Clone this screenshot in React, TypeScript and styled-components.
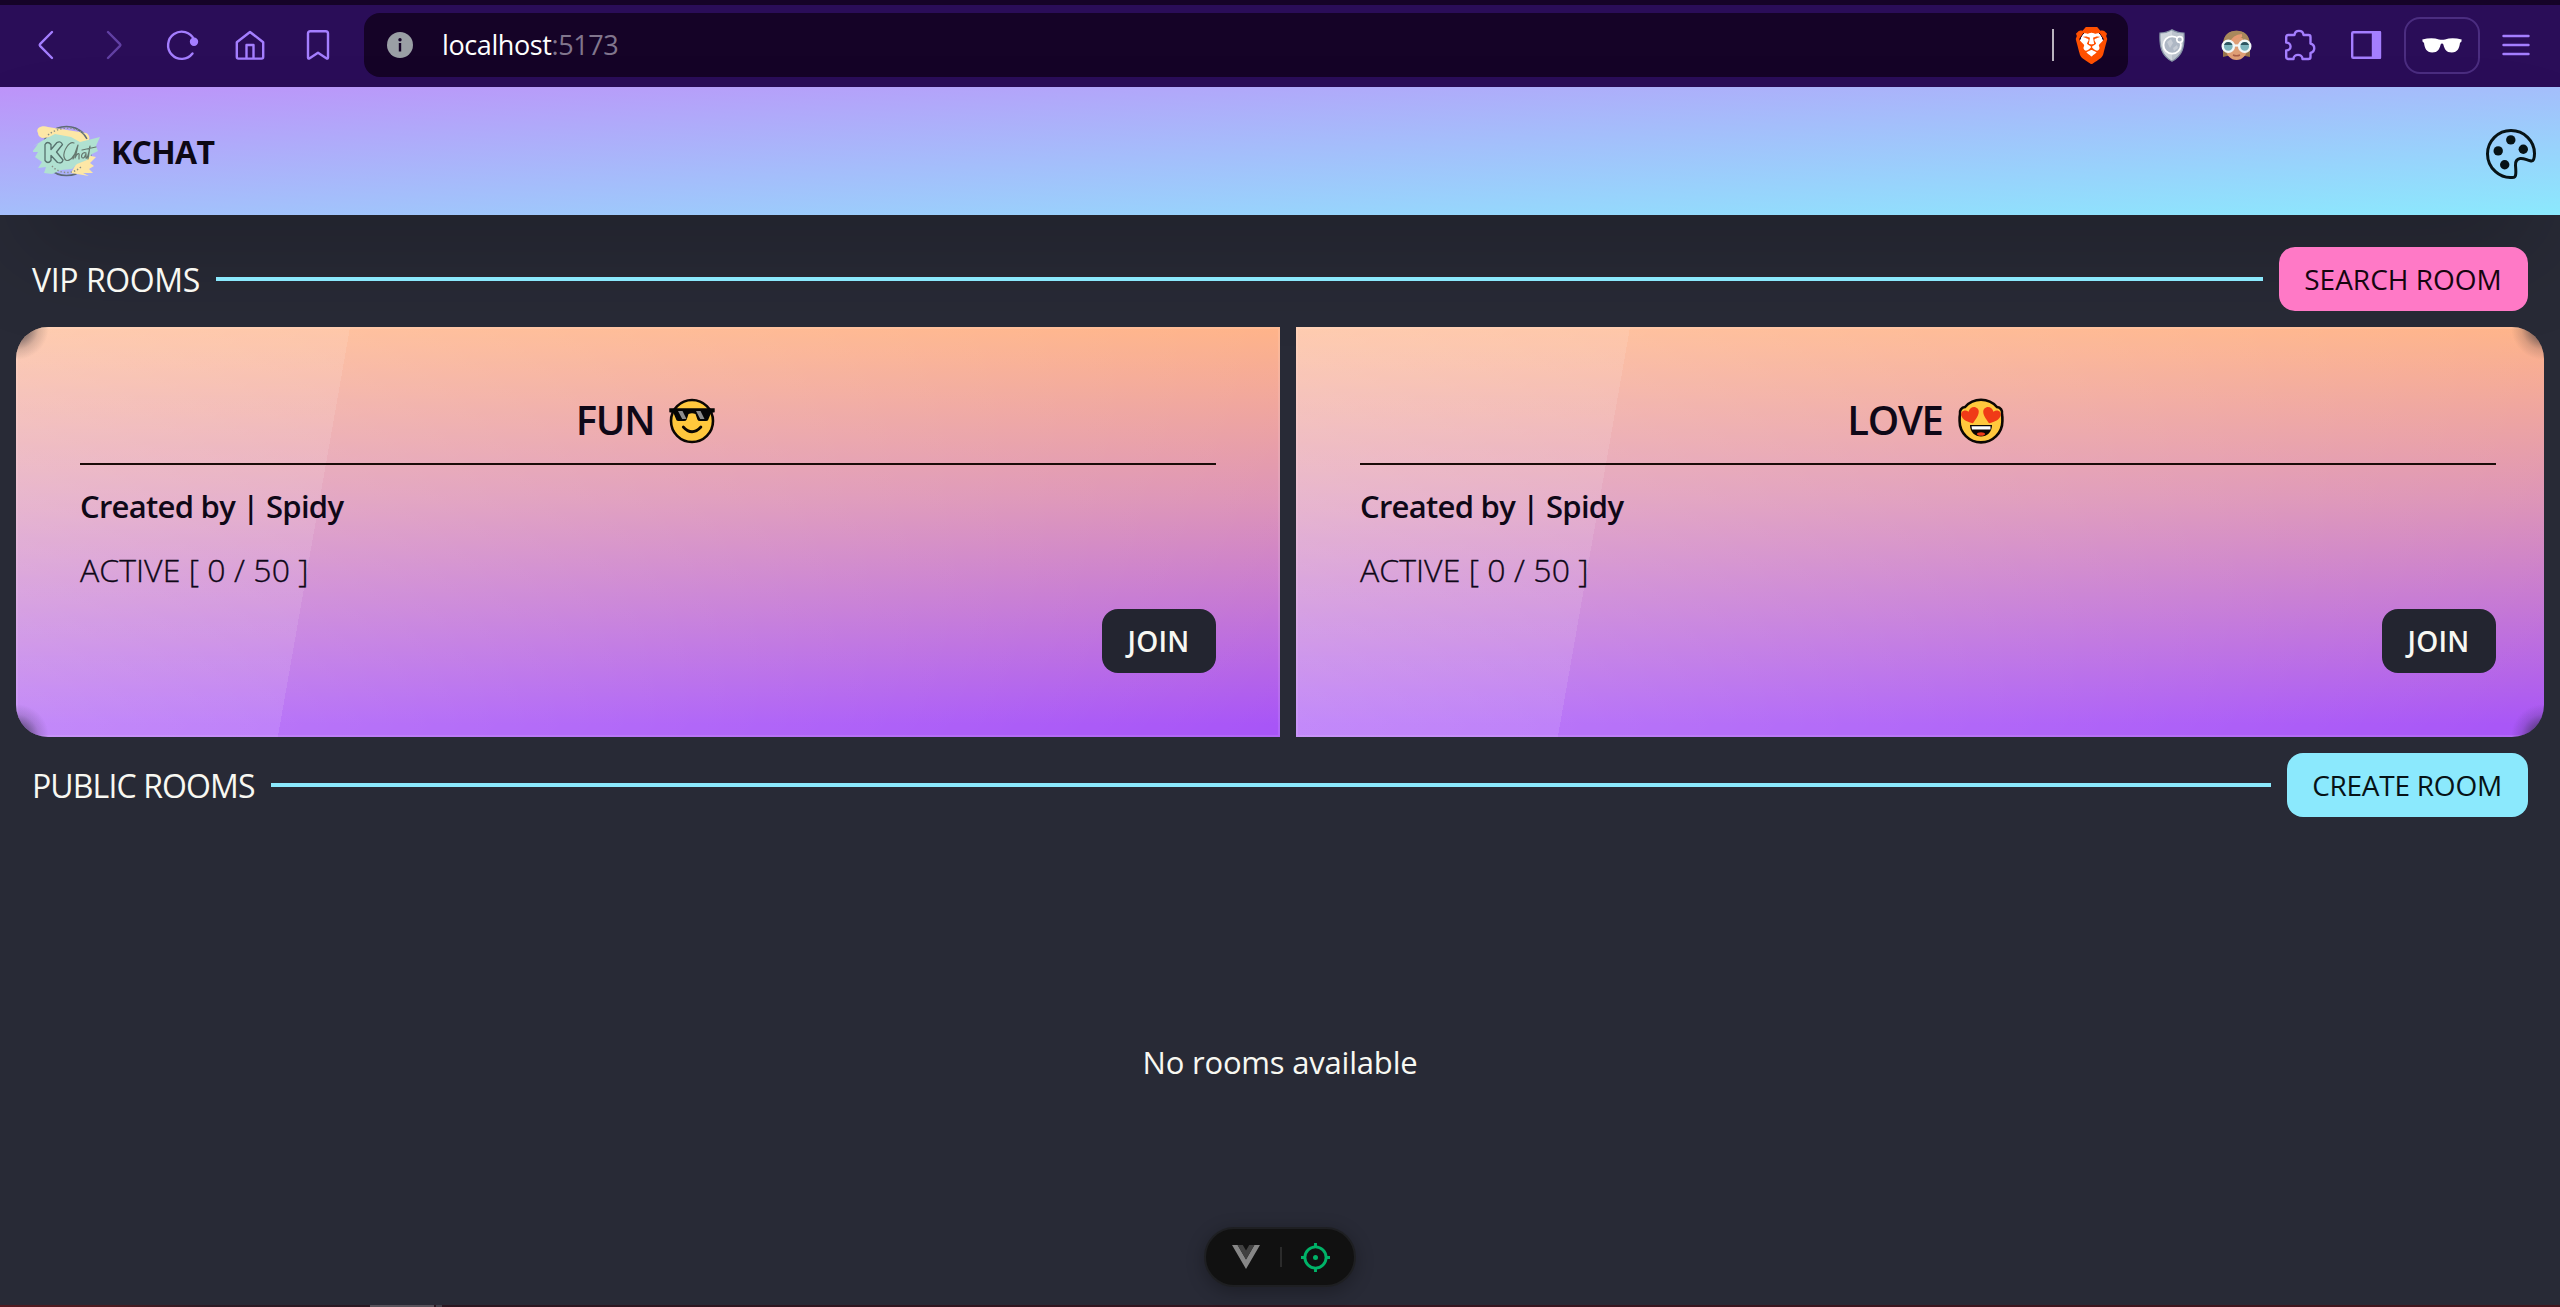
import React from "react";
import styled, { createGlobalStyle, css } from "styled-components";
import { SiBrave } from "react-icons/si";

const GlobalStyle = createGlobalStyle`
  *, *::before, *::after { box-sizing: border-box; }
  html, body { margin: 0; padding: 0; background: #282a36; }
  body {
    font-family: "Open Sans", "Noto Sans", sans-serif;
    color: #f8f8f2;
    overflow: hidden;
  }
`;

/* ---------- window ---------- */

const Window = styled.div`
  display: flex;
  flex-direction: column;
  width: 100%;
  height: 1307px;
  background: #282a36;
`;

/* ---------- browser toolbar ---------- */

const BrowserBar = styled.div`
  display: flex;
  align-items: center;
  flex: none;
  height: 87px;
  padding: 0 8px 2px 12px;
  border-top: 5px solid #150327;
  background: #2a0d58;
  color: #a47eff;
`;

const BarSlot = styled.div<{ $width?: number; $dim?: boolean }>`
  display: flex;
  align-items: center;
  justify-content: center;
  flex: none;
  width: ${(p) => p.$width ?? 68}px;
  height: 64px;
  opacity: ${(p) => (p.$dim ? 0.45 : 1)};
`;

const BarIcon = styled.svg`
  display: block;
  overflow: visible;
  fill: none;
  stroke: currentColor;
  stroke-width: 2.4;
  stroke-linecap: round;
  stroke-linejoin: round;
`;

const AddressBar = styled.div`
  display: flex;
  align-items: center;
  flex: 1;
  height: 64px;
  margin: 0 12px;
  padding: 0 21px 0 23px;
  border-radius: 16px;
  background: #150327;
`;

const Url = styled.div`
  flex: 1;
  margin-left: 29px;
  color: #ffffff;
  font-size: 27px;
  line-height: 40px;
  letter-spacing: -0.4px;
`;

const Port = styled.span`
  color: #81768d;
`;

const AddressDivider = styled.div`
  width: 2px;
  height: 32px;
  margin-right: 22px;
  background: #b9b3be;
`;

const BraveBadge = styled.div`
  display: flex;
  align-items: center;
  justify-content: center;
  width: 31px;
  height: 37px;
  color: #ff5000;
  background: radial-gradient(ellipse 12px 14px at 50% 46%, #fff 95%, transparent 100%);
`;

const BraveLion = styled(SiBrave)`
  flex: none;
  width: 37px;
  height: 37px;
`;

const ProfileButton = styled.div`
  display: flex;
  align-items: center;
  justify-content: center;
  flex: none;
  width: 76px;
  height: 57px;
  margin-left: 4px;
  border: 2px solid #4b2d80;
  border-radius: 16px;
`;

/* ---------- site header ---------- */

const SiteHeader = styled.header`
  display: flex;
  align-items: center;
  justify-content: space-between;
  flex: none;
  height: 128px;
  padding: 0 24px 0 33px;
  background: linear-gradient(to bottom right, #bd93f9, #8be9fd);
  box-shadow: 0 50px 100px -24px rgba(0, 0, 0, 0.25);
`;

const Brand = styled.div`
  display: flex;
  align-items: center;
  gap: 10px;
`;

const BrandName = styled.h1`
  margin: 0;
  padding-top: 2px;
  color: #0d0814;
  font-size: 32px;
  font-weight: 700;
  line-height: 48px;
  letter-spacing: -0.7px;
`;

/* ---------- sections ---------- */

const Page = styled.main`
  position: relative;
  display: flex;
  flex-direction: column;
  flex: 1;
  padding-top: 32px;
`;

const SectionBar = styled.div`
  display: flex;
  align-items: center;
  gap: 16px;
  flex: none;
  height: 64px;
  padding: 0 32px;
`;

const SectionTitle = styled.h2<{ $width: number; $spacing: number }>`
  flex: none;
  width: ${(p) => p.$width}px;
  margin: 0;
  padding-top: 2px;
  font-size: 32px;
  font-weight: 400;
  line-height: 48px;
  white-space: nowrap;
  letter-spacing: ${(p) => p.$spacing}px;
`;

const Rule = styled.div`
  flex: 1;
  height: 4px;
  background: #8be9fd;
`;

const tones = {
  pink: css`background: #ff79c6; color: #16050f;`,
  cyan: css`background: #8be9fd; color: #071316;`,
  dark: css`background: #232530; color: #f8f8f2; font-weight: 600;`,
};

const Button = styled.button<{ $tone: keyof typeof tones; $width: number; $spacing?: number }>`
  flex: none;
  width: ${(p) => p.$width}px;
  height: 64px;
  padding: 0 1px 0 0;
  border: 0;
  border-radius: 16px;
  font-family: inherit;
  font-size: 28px;
  font-weight: 400;
  line-height: 64px;
  text-align: center;
  white-space: nowrap;
  letter-spacing: ${(p) => p.$spacing ?? 0}px;
  ${(p) => tones[p.$tone]}
`;

/* ---------- rooms carousel ---------- */

const cornerShade = (at: string) =>
  `radial-gradient(circle at ${at}, rgba(40,42,54,.7) 8px, rgba(40,42,54,.48) 14px, rgba(40,42,54,.16) 23px, transparent 33px)`;

const Carousel = styled.div`
  position: relative;
  display: flex;
  gap: 16px;
  flex: none;
  height: 410px;
  margin: 16px;
  border-radius: 32px;
  overflow: hidden;

  &::after {
    content: "";
    position: absolute;
    inset: 0;
    pointer-events: none;
    background: ${cornerShade("0 0")}, ${cornerShade("100% 0")},
      ${cornerShade("0 100%")}, ${cornerShade("100% 100%")};
  }
`;

const RoomCard = styled.article`
  display: flex;
  flex-direction: column;
  flex: none;
  width: 1264px;
  padding: 64px;
  color: #0f0817;
  background:
    linear-gradient(135deg, rgba(255, 255, 255, 0.3) 0%, transparent 100%),
    linear-gradient(100deg, rgba(255, 255, 255, 0.1) 25%, transparent 25%),
    linear-gradient(to bottom, #ffae80, #dc90b4 42%, #a855f7 97%);
  box-shadow: inset 0 0 0 2px rgba(255, 255, 255, 0.1);
`;

const RoomTitle = styled.h3`
  display: flex;
  align-items: flex-start;
  justify-content: center;
  gap: 15px;
  height: 74px;
  margin: 0 0 17px;
  padding-right: 5px;
  border-bottom: 2px solid #1a0b08;
  font-size: 40px;
  font-weight: 600;
  line-height: 58px;
  letter-spacing: -1.3px;

  svg { margin-top: 7px; }
`;

const Creator = styled.p`
  margin: 0 0 16px;
  font-size: 31px;
  font-weight: 600;
  line-height: 48px;
  letter-spacing: -0.72px;
`;

const Active = styled.p`
  margin: 0 0 15px;
  font-size: 32px;
  font-weight: 300;
  line-height: 48px;
  letter-spacing: 0.05px;
  -webkit-text-stroke: 0.35px currentColor;
`;

const Actions = styled.div`
  display: flex;
  justify-content: flex-end;
`;

const Empty = styled.div`
  display: flex;
  align-items: center;
  justify-content: center;
  flex: 1;
  padding-top: 2px;
  font-size: 31px;
  letter-spacing: -0.2px;
`;

/* ---------- overlays ---------- */

const DevTools = styled.div`
  position: absolute;
  left: 50%;
  top: 1227px;
  transform: translateX(-50%);
  display: flex;
  align-items: center;
  justify-content: space-between;
  width: 152px;
  height: 60px;
  padding: 0 24px 0 26px;
  border: 2px solid #1e1f22;
  border-radius: 30px;
  background: #111111;
  box-shadow: 0 4px 18px rgba(0, 0, 0, 0.3);
`;

const DevDivider = styled.div`
  width: 2px;
  height: 20px;
  margin-left: 7px;
  margin-right: 6px;
  background: #2b2b2b;
`;

const DesktopEdge = styled.div`
  display: flex;
  flex: none;
  height: 2px;
  padding-left: 370px;
  gap: 2px;
  background: linear-gradient(to right, #521a20 0, #4c1b20 110px, #2c1a24 210px, #2a1822 370px, #2b1620 480px, #33151f 1280px, #43161d 2560px);
`;

const TaskMark = styled.div<{ $width: number; $color: string }>`
  width: ${(p) => p.$width}px;
  background: ${(p) => p.$color};
`;

/* ---------- drawings ---------- */

const Logo = () => (
  <svg width="68" height="56" viewBox="0 0 68 56" fill="none">
    <circle cx="33.500" cy="28" r="24.500" stroke="#5d6a78" strokeWidth="1.700" />
    <path
      d="M5 10c-3-5 4-8 10-6l38 6c3 1 4 5 3 7l-6 6 8 10 5 1-6 6 4 3-5 3 4 4H50l6 3-18-3 4-7L22 14l-13 1c-3-1-4-3-4-5z"
      fill="#fde7a6"
    />
    <path
      d="M12 16l10-5 16 3 9 5 20-5-4 9 2 5-6 3-5 6-10 4-5 5-11 1-9 4-8-1 2-6-8 1 4-6-7-5 3-5-6 0 6-8-6 3z"
      fill="#b0e1d1"
    />
    <path d="M40 4.400a24.500 24.500 0 0 1 14 11.500" stroke="#5d6a78" strokeWidth="1.500" />
    <path d="M15 12c10-8 26-10 36-1M19 43c7 8 20 9 29 1" stroke="#8a8f86" strokeWidth="1.400" strokeDasharray="1.400 2" />
    <path
      d="M12 21.500q2.500-4 6 0v5l6-7q3.500-2 5.500 2l-6 7.500 6.500 8q-1 4-5.500 2.500l-6.500-7v5q-3 4-6 0z"
      stroke="#56716d"
      strokeWidth="1.300"
      strokeLinejoin="round"
    />
    <path
      d="M41 20c-5-2-11 8-10 14 2 7 8 2 10-2M40 36l5-14c-1 6-2 9-3 13 2-5 5-6 4-2v3M53 30c-4-2-6 5-3 5 2 0 3-5 3-4l0 4c1 1 3-4 4-12l-2 13M49 27l14-3"
      stroke="#65786f"
      strokeWidth="1.200"
      strokeLinecap="round"
      strokeLinejoin="round"
    />
  </svg>
);

const PaletteSvg = styled.svg`
  display: block;
  margin-top: 5px;
  overflow: visible;
`;

const Palette = () => (
  <PaletteSvg width="50" height="50" viewBox="0 0 50 50" fill="#071316">
    <path
      d="M28 48.300C14 50.500 1.500 39 1.500 25 1.500 12 12 1.500 25 1.500S48.500 12 48.500 24.500c0 2.500-.3 4.500-.9 6-.5 1.300-2 1.600-3.400 1.200-4-1-7-2.700-10-2.200-3.700.600-5 3-4.700 7 .3 3.500.7 7.500 0 10-.3 1-.8 1.600-1.500 1.800z"
      fill="none"
      stroke="#071316"
      strokeWidth="3"
      strokeLinejoin="round"
    />
    <circle cx="24.800" cy="10.900" r="4.700" />
    <circle cx="12.200" cy="21.900" r="4.700" />
    <circle cx="37.300" cy="20.300" r="4.700" />
    <circle cx="18.700" cy="35.800" r="4.700" />
  </PaletteSvg>
);

const CoolFace = () => (
  <svg width="46" height="46" viewBox="0 0 46 46">
    <circle cx="23" cy="23" r="21" fill="#ffc83d" stroke="#0b0704" strokeWidth="2.600" />
    <path d="M.3 10.300h45.400v4L42 15l-3 7.300q-.5.700-2 .7h-6q-2 0-2.600-1.500L26.500 16q-3.500-1.500-7 0l-1.800 5.500Q17 23 15 23H9.500q-1.500 0-2-.8L4.500 15l-4.200-.7z" fill="#050505" />
    <path d="M9 13h4.500l4 8h-4.300zM27 13h4.500l4 8h-4.300z" fill="#8c8c8c" />
    <path d="M14.300 29q8.700 9.500 17.600 0" fill="none" stroke="#0b0704" strokeWidth="2.800" strokeLinecap="round" />
  </svg>
);

const LoveFace = () => (
  <svg width="46" height="46" viewBox="0 0 46 46">
    <path
      d="M23 1.800c6.500 0 12 2.700 15.900 7.200 3.500.3 5.900 3.500 5.100 7.400.5 2.200.5 4.300.4 6.600A21.300 21.300 0 0 1 1.600 23c-.1-2.300-.1-4.400.4-6.600-.8-3.900 1.600-7.100 5.100-7.400C11 4.500 16.500 1.800 23 1.800z"
      fill="#ffc83d"
      stroke="#0b0704"
      strokeWidth="2.600"
    />
    <path d="M15 25.300C9 24 4.500 21.500 3.300 17.500c-1-4 3.500-6.800 7.300-3.700 1-4.600 6-6.400 9-3.200 3.500 4-1.500 10.300-4.600 14.700z" fill="#f03a17" />
    <path d="M31 25.300c6-1.300 10.500-3.800 11.700-7.800 1-4-3.500-6.800-7.300-3.700-1-4.600-6-6.400-9-3.200-3.500 4 1.500 10.300 4.600 14.700z" fill="#f03a17" />
    <path d="M12 27h22c0 7-5 11.500-11 11.500S12 34 12 27z" fill="#0b0704" />
    <path d="M13.500 28.200h19v3.300h-18.500z" fill="#fff" />
    <ellipse cx="23" cy="36" rx="4" ry="1.800" fill="#f03a17" />
  </svg>
);

const InfoIcon = () => (
  <svg width="26" height="26" viewBox="0 0 26 26">
    <circle cx="13" cy="13" r="13" fill="#9a9fa5" />
    <circle cx="13" cy="7.700" r="1.700" fill="#150327" />
    <path d="M13 11v8.500" stroke="#150327" strokeWidth="2.400" />
  </svg>
);

const ShieldIcon = () => (
  <svg width="26" height="33" viewBox="0 0 26 33">
    <path d="M13 .8c3.500 2.200 7.500 3.200 12 3.200.7 14-1.500 22.500-12 28.200C2.500 26.500.3 18 1 4 5.500 4 9.500 3 13 .800z" fill="#bcc3cd" stroke="#8693a6" strokeWidth="1.200" />
    <path d="M13 1.500V31.500C3.500 26 1.500 18 1.800 4.800 6 4.800 9.500 3.500 13 1.500z" fill="#cfd5dc" />
    <circle cx="13.200" cy="16" r="8.700" fill="#aeb7c4" stroke="#fff" strokeWidth="1.800" />
    <path d="M8 13l4-3 2 4-3 5zM14 19l4-3 1 3-4 3z" fill="#c6ccd5" />
    <circle cx="20.700" cy="10.500" r="2.900" fill="#aeb7c4" stroke="#fff" strokeWidth="1.600" />
  </svg>
);

const AvatarIcon = () => (
  <svg width="31" height="31" viewBox="0 0 31 31">
    <path d="M2 27V14C2 6 8 .8 15.500.8S29 6 29 14v13l-5-1H6z" fill="#96744a" />
    <ellipse cx="15.500" cy="18" rx="10.800" ry="12" fill="#df9e75" />
    <path d="M3 14C2 5 8 .8 15.500.8S29 5 28 14c-4-.5-6-4-7-7.500C16 7 11 9.500 9.500 14z" fill="#a9885c" />
    <path d="M10 13c2-5 6-7 11-7.500" stroke="#e69a72" strokeWidth="3" fill="none" />
    <circle cx="7.300" cy="16.300" r="5.600" fill="#7cb5bd" stroke="#f1f7f7" strokeWidth="2.400" />
    <circle cx="23.700" cy="16.300" r="5.600" fill="#7cb5bd" stroke="#f1f7f7" strokeWidth="2.400" />
    <path d="M3 15a4.500 4.500 0 0 1 8.500 0zM19.500 15a4.500 4.500 0 0 1 8.500 0z" fill="#2c5560" />
    <path d="M12.500 15.500h6" stroke="#f1f7f7" strokeWidth="2.200" />
    <path d="M12 25q3.500 1.600 7 0" stroke="#a85e48" strokeWidth="1.500" fill="none" />
  </svg>
);

const GlassesIcon = () => (
  <svg width="40" height="15" viewBox="0 0 40 15" fill="#fff">
    <path d="M.3 1.500Q10-.8 17 1.500q3 .7 6 0Q30-.8 39.700 1.500l-.4 2.600-1.300.7c-.6 5.500-2.500 9.700-8.200 9.700-5.600 0-7.300-3.500-8.300-7.500-.5-2-2.500-2-3 0-1 4-2.700 7.500-8.300 7.500C4.500 14.500 2.600 10.300 2 4.800L.7 4.100z" />
  </svg>
);

const VueMark = () => (
  <svg width="28" height="24" viewBox="0 0 28 24">
    <path d="M0 0h5.600L14 14.500 22.400 0H28L14 24z" fill="#878787" />
    <path d="M5.600 0h5.200L14 5.400 17.200 0h5.200L14 14.500z" fill="#414141" />
  </svg>
);

const TargetIcon = () => (
  <svg width="29" height="29" viewBox="0 0 29 29" fill="none" stroke="#00b368" strokeWidth="2.900">
    <circle cx="14.500" cy="14.500" r="10.600" />
    <path d="M14.500 0v5M14.500 24v5M0 14.500h5M24 14.500h5" />
    <circle cx="14.500" cy="14.500" r="2.500" fill="#00b368" stroke="none" />
  </svg>
);

/* ---------- composition ---------- */

type Room = { name: string; face: React.ReactNode; creator: string; active: number; limit: number };

const rooms: Room[] = [
  { name: "FUN", face: <CoolFace />, creator: "Spidy", active: 0, limit: 50 },
  { name: "LOVE", face: <LoveFace />, creator: "Spidy", active: 0, limit: 50 },
];

const Toolbar = () => (
  <BrowserBar>
    <BarSlot>
      <BarIcon width="14" height="28" viewBox="0 0 14 28"><path d="M13 1 1 13.200q-.7.800 0 1.600L13 27" /></BarIcon>
    </BarSlot>
    <BarSlot $dim>
      <BarIcon width="14" height="28" viewBox="0 0 14 28"><path d="M1 1l12 12.200q.7.800 0 1.600L1 27" /></BarIcon>
    </BarSlot>
    <BarSlot>
      <BarIcon width="30" height="30" viewBox="0 0 30 30">
        <path d="M25.500 23.500A13.600 13.600 0 1 1 27 9.500" />
        <circle cx="27" cy="11.800" r="3" fill="currentColor" />
      </BarIcon>
    </BarSlot>
    <BarSlot>
      <BarIcon width="30" height="30" viewBox="0 0 30 30">
        <path d="M15 2 1.800 12.200V27q0 1.600 1.600 1.600h23.200q1.600 0 1.600-1.600V12.200zM11.500 28V15h7v13" />
      </BarIcon>
    </BarSlot>
    <BarSlot>
      <BarIcon width="22" height="30" viewBox="0 0 22 30">
        <path d="M1 3.500Q1 1.200 3.300 1.200h15.400Q21 1.200 21 3.500v24q-.2 1.800-1.700.8L11 22.800 2.700 28.300Q1.200 29.300 1 27.500z" />
      </BarIcon>
    </BarSlot>
    <AddressBar>
      <InfoIcon />
      <Url>localhost<Port>:5173</Port></Url>
      <AddressDivider />
      <BraveBadge><BraveLion /></BraveBadge>
    </AddressBar>
    <BarSlot $width={64}><ShieldIcon /></BarSlot>
    <BarSlot $width={64}><AvatarIcon /></BarSlot>
    <BarSlot $width={64}>
      <BarIcon width="30" height="30" viewBox="0 0 30 30">
        <path d="M1.200 7q0-2 2-2H9.500C10-.5 18-.5 18.500 5h5q2 0 2 2v6.500C30.500 15 30.500 21.500 25.500 23v4q0 2-2 2h-6C17.500 23.500 8.500 23.500 8.500 29H3.200q-2 0-2-2v-6.500C7 20.500 7 12.500 1.200 12.500z" />
      </BarIcon>
    </BarSlot>
    <BarSlot $width={68}>
      <BarIcon width="30" height="28" viewBox="0 0 30 28">
        <rect x="1.200" y="1.200" width="27.600" height="25.600" rx="1" />
        <path d="M22 1.200h7v25.600h-7z" fill="currentColor" />
      </BarIcon>
    </BarSlot>
    <ProfileButton><GlassesIcon /></ProfileButton>
    <BarSlot $width={72}>
      <BarIcon width="26" height="20" viewBox="0 0 26 20"><path d="M.5 1h25M.5 10h25M.5 19h25" /></BarIcon>
    </BarSlot>
  </BrowserBar>
);

const RoomTile = ({ room }: { room: Room }) => (
  <RoomCard>
    <RoomTitle>
      <span>{room.name}</span>
      {room.face}
    </RoomTitle>
    <Creator>Created by | {room.creator}</Creator>
    <Active>ACTIVE [ {room.active} / {room.limit} ]</Active>
    <Actions>
      <Button $tone="dark" $width={114} $spacing={0.3}>JOIN</Button>
    </Actions>
  </RoomCard>
);

export default function App() {
  return (
    <Window>
      <GlobalStyle />
      <Toolbar />
      <SiteHeader>
        <Brand>
          <Logo />
          <BrandName>KCHAT</BrandName>
        </Brand>
        <Palette />
      </SiteHeader>
      <Page>
        <SectionBar>
          <SectionTitle $width={168} $spacing={-0.4}>VIP ROOMS</SectionTitle>
          <Rule />
          <Button $tone="pink" $width={249}>SEARCH ROOM</Button>
        </SectionBar>
        <Carousel>
          {rooms.map((room) => (
            <RoomTile key={room.name} room={room} />
          ))}
        </Carousel>
        <SectionBar>
          <SectionTitle $width={223} $spacing={-0.88}>PUBLIC ROOMS</SectionTitle>
          <Rule />
          <Button $tone="cyan" $width={241} $spacing={-0.25}>CREATE ROOM</Button>
        </SectionBar>
        <Empty>No rooms available</Empty>
      </Page>
      <DesktopEdge>
        <TaskMark $width={64} $color="#58515a" />
        <TaskMark $width={6} $color="#453f49" />
      </DesktopEdge>
      <DevTools>
        <VueMark />
        <DevDivider />
        <TargetIcon />
      </DevTools>
    </Window>
  );
}
